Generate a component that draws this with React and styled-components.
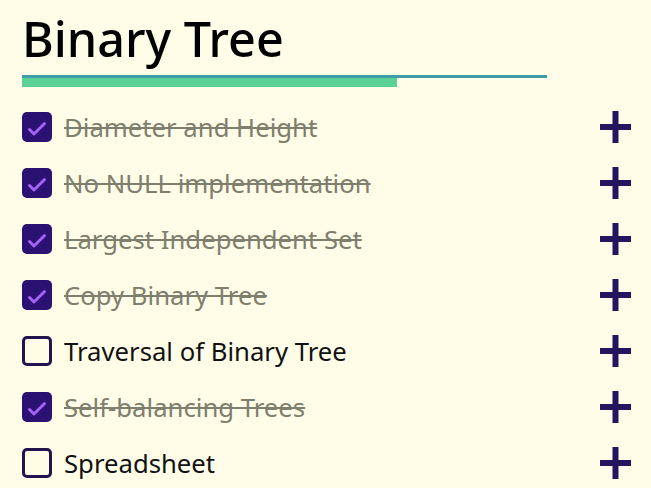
import { createGlobalStyle } from 'styled-components';
import styled from 'styled-components';

const GlobalStyle = createGlobalStyle`
  body {
    margin: 0;
    background: #fffde8;
    font-family: 'Noto Sans', 'Open Sans', sans-serif;
  }
`;

const Page = styled.div`
  padding: 8px 20px 0 22px;
  display: flex;
  flex-direction: column;
`;

const Title = styled.h1`
  margin: 0;
  font-size: 48.5px;
  font-weight: 500;
  line-height: 60px;
  color: #000;
`;

const Track = styled.div`
  margin-top: 7px;
  width: 525px;
  border-top: 3px solid #3d9fa5;
`;

const Fill = styled.div`
  height: 9px;
  background: #5bd197;
`;

const List = styled.ul`
  list-style: none;
  margin: 12px 0 0;
  padding: 0;
`;

const Row = styled.li`
  height: 56px;
  display: flex;
  align-items: center;
  gap: 12px;
`;

const Box = styled.span`
  box-sizing: border-box;
  width: 30px;
  height: 30px;
  border-radius: 5px;
  flex-shrink: 0;
  display: flex;
  align-items: center;
  justify-content: center;
  background: ${(p) => (p.$checked ? '#2b1172' : 'transparent')};
  border: ${(p) => (p.$checked ? 'none' : '3px solid #22144f')};
`;

const Label = styled.span`
  flex: 1;
  font-size: 25.7px;
  color: ${(p) => (p.$done ? '#7f7f6e' : '#111')};
  text-decoration: ${(p) => (p.$done ? 'line-through' : 'none')};
  text-decoration-thickness: 2px;
`;

const AddButton = styled.button`
  background: none;
  border: none;
  padding: 0;
  width: 31px;
  height: 32px;
  cursor: pointer;
  display: flex;
`;

const items = [
  { name: 'Diameter and Height', done: true },
  { name: 'No NULL implementation', done: true },
  { name: 'Largest Independent Set', done: true },
  { name: 'Copy Binary Tree', done: true },
  { name: 'Traversal of Binary Tree', done: false },
  { name: 'Self-balancing Trees', done: true },
  { name: 'Spreadsheet', done: false },
];

const Check = () => (
  <svg width="20" height="16" viewBox="0 0 20 16" style={{ marginTop: 3, marginLeft: -1 }}>
    <path d="M2.5 8.5 L7 13 L17.5 2.5" fill="none" stroke="#a463f2" strokeWidth="3" strokeLinecap="round" strokeLinejoin="round" />
  </svg>
);

const Plus = () => (
  <svg width="31" height="32" viewBox="0 0 31 32">
    <path d="M15.5 0 V32 M0 16 H31" stroke="#23165e" strokeWidth="6" />
  </svg>
);

const App = () => {
  const progress = (items.filter((i) => i.done).length / items.length) * 100;

  return (
    <Page>
      <GlobalStyle />
      <Title>Binary Tree</Title>
      <Track>
        <Fill style={{ width: `${progress}%` }} />
      </Track>
      <List>
        {items.map((item) => (
          <Row key={item.name}>
            <Box $checked={item.done}>{item.done && <Check />}</Box>
            <Label $done={item.done}>{item.name}</Label>
            <AddButton type="button">
              <Plus />
            </AddButton>
          </Row>
        ))}
      </List>
    </Page>
  );
};

export default App;
